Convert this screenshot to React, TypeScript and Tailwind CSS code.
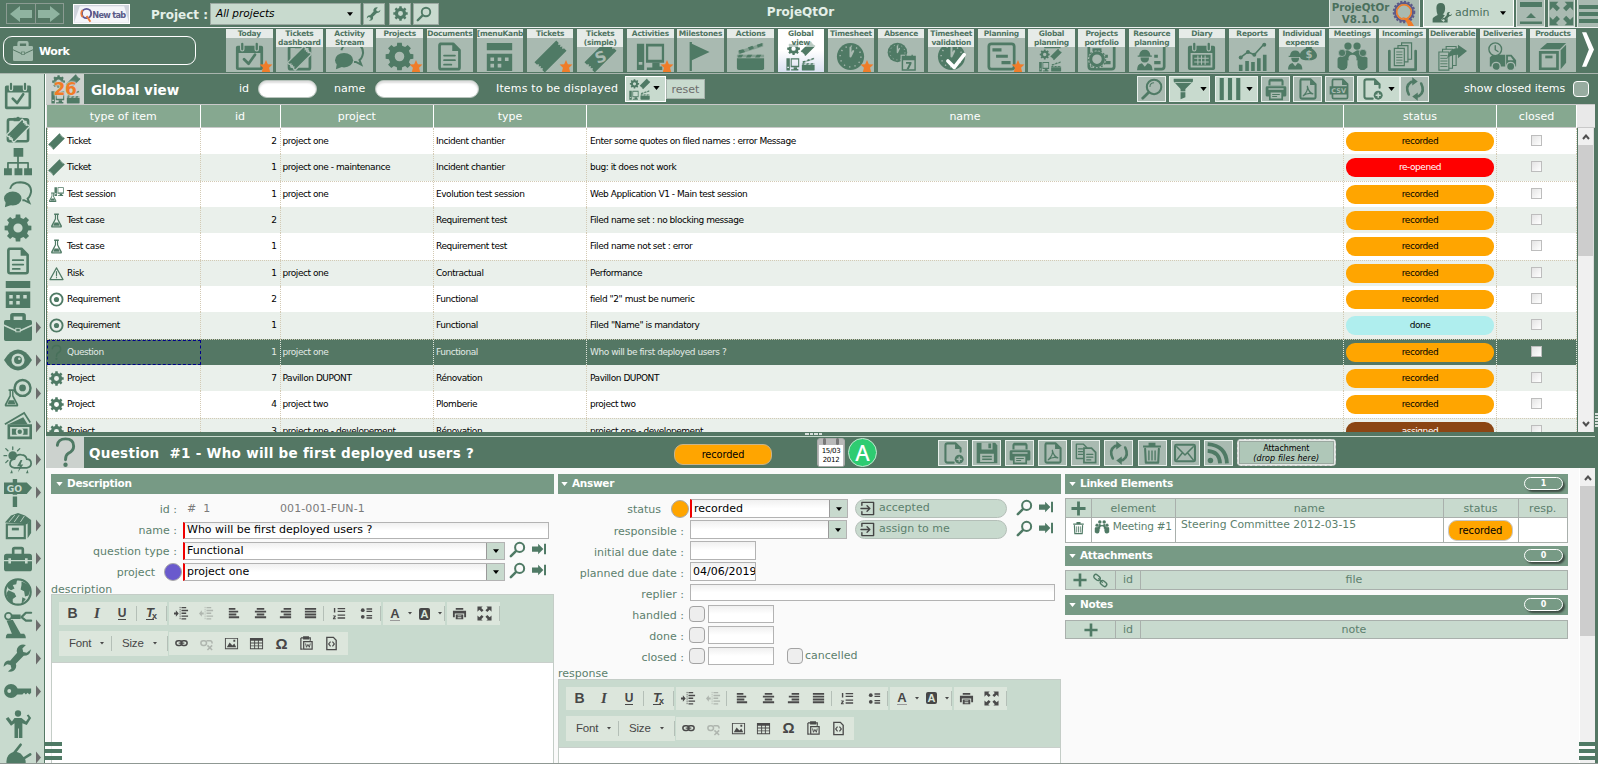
import React from "react";

type Draw = (b: string) => React.ReactNode;

function gearPath(cx: number, cy: number, R: number, r: number, n: number, hole: number) {
  const pts: string[] = [];
  for (let i = 0; i < n; i++) {
    const a = (i / n) * Math.PI * 2 - Math.PI / 2;
    const s = Math.PI / n;
    const at = (ang: number, rad: number) =>
      `${(cx + Math.cos(ang) * rad).toFixed(2)},${(cy + Math.sin(ang) * rad).toFixed(2)}`;
    pts.push(at(a - s * 0.62, r), at(a - s * 0.42, R), at(a + s * 0.42, R), at(a + s * 0.62, r));
  }
  return `M${pts.join("L")}Z M${cx - hole},${cy}a${hole},${hole} 0 1 0 ${hole * 2},0a${hole},${hole} 0 1 0 ${-hole * 2},0Z`;
}

const Gear = ({ x = 16, y = 16, R = 15.5 }: { x?: number; y?: number; R?: number }) => (
  <path fillRule="evenodd" d={gearPath(x, y, R, R * 0.78, 8, R * 0.34)} />
);
const line = (d: string, w = 2.5, c = "currentColor") => (
  <path d={d} fill="none" stroke={c} strokeWidth={w} strokeLinecap="round" strokeLinejoin="round" />
);
const ticket = (
  <path
    transform="translate(16 16) rotate(-45)"
    d="M-17-8H17v3.500l-2 1.500 2 1.500-2 1.500 2 1.500-2 1.500 2 1.500V8H-17V4.500l2-1.500-2-1.500 2-1.500-2-1.500 2-1.500-2-1.500z"
  />
);
const desktop = (
  <>
    <path fillRule="evenodd" d="M1 2h8v29H1zM3 22v3h4v-3z" />
    <path fillRule="evenodd" d="M11 2h20v21H11zM13.500 5v14.500h15V5z" />
    <path d="M18 23h8v4h3v4H12v-3h6z" />
  </>
);
const clapper = (
  <>
    <path d="M1 18h30v11q0 2-2 2H3q-2 0-2-2z" />
    <path d="M1 14h30v3H1z" opacity=".45" />
    <path d="M2 10 30 1v4L3 13.500z" opacity=".4" />
    <path d="M3 9l5-1 2 3-6 2zM13 6l5-2 2 3-5 2zM23 3l6-2v3l-5 2zM3 14h5l-2 3H2zM13 14h5l-2 3h-5zM23 14h5l-2 3h-5z" />
  </>
);
const clock = (b: string) => (
  <>
    <circle cx="16" cy="16" r="15" />
    <circle cx="16" cy="16" r="11.500" fill="none" stroke={b} strokeWidth="1.500" strokeDasharray="1.500 4.520" />
    {line("M16 16V6M16 16l3-6", 2.2, b)}
  </>
);
const doc = (
  <>
    {line("M6 2h14l7 7v19q0 2-2 2H7q-2 0-2-2V4q0-2 2-2z", 3)}
    <path d="M19 2v8h8z" />
    {line("M10 15h12M10 20h12M10 25h8", 2)}
  </>
);
const plan = (
  <>
    <rect x="2" y="2" width="28" height="28" rx="3" fill="none" stroke="currentColor" strokeWidth="3" />
    <path d="M6 7h10v3.500H6zM10 14h13v3.500H10zM16 21h10v3.500H16z" />
  </>
);
const flask = <path fillRule="evenodd" d="M11 1h10v3h-1.500v8l8 15q1 4-2.500 4H7q-3.500 0-2.500-4l8-15V4H11zM15 4v9l-7.500 15h17L17 13V4zM12 20h8l3 7H9z" />;
const target = (
  <>
    <circle cx="16" cy="16" r="13" fill="none" stroke="currentColor" strokeWidth="4" />
    <circle cx="16" cy="16" r="5.500" />
  </>
);
const worker = (
  <>
    <path d="M3 10q1-8 8-8t8 8h2v2H1v-2zM5 13h12q0 7-6 7t-6-7zM0 31q0-9 7-10l4 5 4-5q7 1 7 10z" />
  </>
);
const search = (
  <>
    <circle cx="20" cy="12" r="8.500" fill="none" stroke="currentColor" strokeWidth="3.800" />
    {line("M13 19 3.500 28.500", 4.800)}
  </>
);
const wrench = (
  <path d="M31 6l-5 4-4-1-1-4 4-4q-7-2-10 4-1 3 0 5L7 19q-5-1-7 4l-.5 3 4-3 4 1 1 4-4 3.500q7 1 9-4 1-3 0-5l9-9q7 0 8-6z" />
);
const calendar = (b: string) => (
  <>
    <path fillRule="evenodd" d="M3 4h26q2 0 2 2v23q0 2-2 2H3q-2 0-2-2V6q0-2 2-2zM4 12v16h24V12z" />
    {line("M8 2v6M24 2v6", 5, b)}
    {line("M8 2v6M24 2v6", 2.500)}
  </>
);
const page = (
  <>
    {line("M27 14V9l-7-7H8Q5 2 5 5v22q0 3 3 3h9", 3)}
    <path d="M19 2v8h8z" />
  </>
);
const people = (b: string) => (
  <>
    <circle cx="11" cy="4.500" r="4" />
    <circle cx="21" cy="4.500" r="4" />
    <path d="M5 20v-7q1-4 6-4l5 3 5-3q5 0 6 4v7z" />
    <path d="M-.5 19q0-3 5-3t6 3v9q-3 3-5.500 3t-5.500-3zM21.500 19q0-3 6-3t5 3v9q-3 3-5.500 3t-5.500-3z" />
    <circle cx="4.500" cy="12" r="4" stroke={b} strokeWidth=".8" />
    <circle cx="27.500" cy="12" r="4" stroke={b} strokeWidth=".8" />
    <circle cx="16" cy="18.500" r="4.500" fill={b} />
    <path d="M9.500 32q0-9 6.500-9t6.500 9z" fill={b} />
  </>
);
const mini = (el: React.ReactNode, x: number, y: number, s: number) => (
  <g transform={`translate(${x} ${y}) scale(${s})`}>{el}</g>
);
const globalIcon = (
  <>
    {mini(<Gear />, 1, 0, 0.46)}
    {mini(ticket, 17, 0, 0.46)}
    {mini(desktop, 0, 17, 0.47)}
    {mini(clapper, 17, 17, 0.47)}
  </>
);
const arrowsOut = (
  <path d="M1 1h11L9 4l5 5-4 4-5-5-4 4zM31 1v11l-4-4-5 5-4-4 5-5-3-3zM1 31V20l4 4 5-5 4 4-5 5 3 3zM31 31H20l3-3-5-5 4-4 5 5 4-4z" />
);

const icons: Record<string, Draw> = {
  today: (b) => (<>{calendar(b)}{line("M10 19l5 5 7-10", 3)}</>),
  diary: (b) => (
    <>
      {calendar(b)}
      <path d="M6 14h20v12H6z" />
      <path d="M8 18h16M8 22h16M12 15v10M16 15v10M20 15v10" stroke={b} strokeWidth="1.200" />
    </>
  ),
  clip: (b) => (
    <>
      <rect x="4.500" y="5" width="23" height="25" rx="2" fill="none" stroke="currentColor" strokeWidth="3" />
      <path d="M11 7V3h3a2.500 2.500 0 0 1 4 0h3v4z" />
      <g stroke={b} strokeWidth="2">{mini(ticket, 4, 6, 0.75)}</g>
    </>
  ),
  org: () => (
    <>
      <path d="M11 0h11v10H11zM0 23h9v8H0zM12 23h9v8h-9zM23 23h9v8h-9z" />
      {line("M16 9v15M4.500 24v-7h23v7", 2)}
    </>
  ),
  chat: () => (
    <>
      <ellipse cx="10" cy="20" rx="10" ry="8" />
      <path d="M2 24l-1 6 8-3z" />
      <path d="M7 9Q9 1.500 18.500 1.500 31 2 31 12q-1 6-4 8l2 5-6-3h-2" fill="none" stroke="currentColor" strokeWidth="2.200" />
    </>
  ),
  gear: () => <Gear />,
  doc: () => doc,
  kanban: (b) => (
    <>
      <path d="M2 1h28v8H2zM2 13h28v19H2z" />
      <path d="M6 17h4v4H6zM14 17h4v4h-4zM22 17h4v4h-4zM6 24h4v4H6zM14 24h4v4h-4z" fill={b} />
    </>
  ),
  ticket: () => ticket,
  ticketS: (b) => (
    <>
      {ticket}
      <text x="16" y="22.500" textAnchor="middle" fontSize="17" fontWeight="bold" fill={b} transform="rotate(-20 16 16)">S</text>
    </>
  ),
  desktop: () => desktop,
  flag: () => <path d="M4 0h2.500v2L26 11 6.500 20v12H4z" />,
  clapper: () => clapper,
  global: () => globalIcon,
  clock,
  absence: (b) => (
    <>
      {mini(clock(b), 0, 0, 0.72)}
      <path d="M15 14h17v18H15z" fill={b} />
      <path d="M17 16h14v15H17z" fill="none" stroke="currentColor" strokeWidth="1.600" />
      <path d="M17 16h14v4H17zM20 14h1.500v3H20zM27 14h1.500v3H27z" />
      <path d="M21 22h6v2l-3 6h-2.500l3-6H21z" />
    </>
  ),
  validation: (b) => (<>{clock(b)}{line("M12 21l7 7L30 14", 4, "#fff")}</>),
  plan: () => plan,
  globalPlan: () => (
    <>
      <path d="M1 0h12v3H1zM16 0h12v3H16zM8 5h18v2H8z" />
      {mini(globalIcon, 2, 8, 0.78)}
    </>
  ),
  portfolio: (b) => (
    <>
      {plan}
      <circle cx="11" cy="19" r="10" fill={b} />
      <circle cx="11" cy="19" r="7" fill="none" stroke="currentColor" strokeWidth="3.500" />
      <circle cx="11" cy="19" r="9.500" fill="none" stroke="currentColor" strokeWidth="1.500" strokeDasharray="2 2" />
    </>
  ),
  resource: (b) => (
    <>
      {plan}
      <path d="M0 5h19v27H0z" fill={b} />
      {mini(worker, 0, 7, 0.78)}
    </>
  ),
  reports: () => (
    <>
      <path d="M1 25h4v7H1zM8 21h4v11H8zM14.500 22h4v10h-4zM21 18h4v14h-4zM27.500 14h4v18h-4z" />
      {line("M3 17l8-6 7 3L29 2", 1.800)}
      <circle cx="3" cy="17" r="2.200" /><circle cx="11" cy="11" r="2.200" /><circle cx="18" cy="14" r="2.200" /><circle cx="29" cy="3" r="2.200" />
    </>
  ),
  expense: (b) => (
    <>
      {mini(worker, 0, 8, 0.72)}
      <path d="M19 4h8l-1 3q6 4 6 8t-6 5h-7q-6 0-6-5t7-8z" />
      <text x="23" y="18" textAnchor="middle" fontSize="11" fontWeight="bold" fill={b}>$</text>
    </>
  ),
  people,
  incomings: (b) => (
    <>
      {line("M1.500 10v20.500h29V10", 3)}
      <path d="M15 1h11v18H15z" fill={b} stroke="currentColor" strokeWidth="1.300" />
      <path d="M11 4h11v18H11z" fill={b} stroke="currentColor" strokeWidth="1.300" />
      <path d="M7 7h11v19H7z" fill={b} stroke="currentColor" strokeWidth="1.300" />
      {line("M9.500 11h6M9.500 14h6M9.500 17h6M9.500 20h6M9.500 23h6", 1)}
    </>
  ),
  deliverables: (b) => (
    <>
      <path d="M9 5h11v21H9z" fill={b} stroke="currentColor" strokeWidth="1.200" />
      <path d="M5 8h11v21H5z" fill={b} stroke="currentColor" strokeWidth="1.200" />
      <path d="M1 11h11v20H1z" fill={b} stroke="currentColor" strokeWidth="1.200" />
      {line("M3 15h7M3 18h7M3 21h7M3 24h7M3 27h7", 1)}
      <path d="M10 18Q12 7 22 7V3l10 7-10 8v-4q-8 0-12 4z" />
    </>
  ),
  truck: (b) => (
    <>
      <path fillRule="evenodd" d="M5 14h14v13H2V17zM20 14h6l5 6v7H20zM22 16v4h6l-3-4z" />
      <circle cx="9" cy="27" r="4.500" stroke={b} strokeWidth="1.500" /><circle cx="25" cy="27" r="4.500" stroke={b} strokeWidth="1.500" />
      <circle cx="8" cy="8" r="7" fill={b} stroke="currentColor" strokeWidth="1.500" />
      {line("M8 4v4.500l3 2", 1.500)}
    </>
  ),
  box: () => (
    <>
      <path fillRule="evenodd" d="M1 10h22v21H1zM4 13v15h16V13z" />
      <path d="M2 8L10 1h21l-7 7zM25 9l6-6v20l-6 7z" />
      <path d="M8 15h8v3H8z" />
    </>
  ),
  briefcase: (b) => (
    <>
      <path fillRule="evenodd" d="M7 8V3q0-3 3-3h12q3 0 3 3v5h5q2 0 2 2v20q0 2-2 2H2q-2 0-2-2V10q0-2 2-2zM11 8h10V4H11z" />
      {line("M0 14l13 6h6l13-6", 1.600, b)}
      <path d="M13 17h6v5h-6z" fill={b} />
      <path d="M14 18h4v3h-4z" />
    </>
  ),
  eye: (b) => (
    <>
      <path d="M0 16Q7 4 16 4t16 12Q25 28 16 28T0 16z" />
      <circle cx="16" cy="16" r="7.500" fill={b} />
      <circle cx="16" cy="16" r="4.500" />
      <circle cx="17.500" cy="14.500" r="1.500" fill={b} />
    </>
  ),
  testTarget: () => (<>{mini(target, 10, -1, 0.7)}{mini(flask, -2, 11, 0.66)}</>),
  money: (b) => (
    <>
      <path d="M1 14L23 1l7 11" fill="none" stroke="currentColor" strokeWidth="2" />
      <path d="M5 14L22 6l5 8z" />
      <path fillRule="evenodd" d="M4 14h28v17H4zM7 17v11h22V17z" />
      <path d="M9 19h18v7H9z" />
      <circle cx="18" cy="22.500" r="4.500" fill={b} /><circle cx="18" cy="22.500" r="2.500" />
    </>
  ),
  weather: (b) => (
    <>
      <circle cx="10" cy="11" r="5" />
      {line("M10 1v3M2 3l2.500 2.500M0 11h3M18 3l-2.500 2.500M2 19l2.500-2.500", 1.500)}
      <path d="M12 25q-6-1-5-6 1-4 5-4 2-6 8-5 5 0 6 5 5 0 5 5 0 4-5 5z" fill={b} stroke="currentColor" strokeWidth="2" />
      <path d="M19 16l-4 7h3l-2 7 6-9h-3l2-5zM9 27l-2 4h3zM27 27l-2 4h3z" />
    </>
  ),
  go: (b) => (
    <>
      <path d="M10 0h5v32h-5zM0 4h26l6 6-6 7H0z" />
      <path d="M9 18h7v2H9z" fill={b} />
      <text x="12" y="14.500" textAnchor="middle" fontSize="10.500" fontWeight="bold" fill={b}>GO</text>
    </>
  ),
  boxes: (b) => (
    <>
      <path d="M1 12L8 4l8-3 8 3 7 5-5 5zM27 13l4-4v15l-4 6z" />
      <path fillRule="evenodd" d="M2 13h23v18H2zM4.500 15.500v13h18v-13z" />
      <path d="M9 18h8v3H9z" />
      {line("M6 11l6-7M12 11l5-7M19 11l4-6", 1, b)}
    </>
  ),
  toolbox: (b) => (
    <>
      <path fillRule="evenodd" d="M9 10V5q0-3 3-3h8q3 0 3 3v5h6q3 0 3 3v14q0 3-3 3H3q-3 0-3-3V13q0-3 3-3zM12 10h8V5h-8z" />
      <path d="M0 17h32v1.500H0zM5 15h3v6H5zM24 15h3v6h-3z" fill={b} />
    </>
  ),
  globe: (b) => (
    <>
      <circle cx="16" cy="16" r="14.500" fill={b} stroke="currentColor" strokeWidth="2.500" />
      <path d="M3 8Q8 1 15 2l-1 5-4 1 2 4-4 2-3-2zM5 14l7 3 2 4-4 3v5Q3 24 3 17zM20 4q8 2 10 9l-2 7-4 1-1-6-4-2 1-5zM21 22l4 2-5 6z" />
    </>
  ),
  robot: () => (
    <>
      <circle cx="5" cy="6" r="3.800" fill="none" stroke="currentColor" strokeWidth="2" />
      <path d="M8 4h11v5H8zM3 11l7-1 9 16H9zM4 26h19q2 2 2 5H2q0-4 2-5z" />
      {line("M31 2h-6l-5 5 5 4h6", 2.500)}
    </>
  ),
  wrench: () => wrench,
  key: (b) => (
    <>
      <circle cx="8" cy="16" r="8" />
      <circle cx="6" cy="16" r="2.200" fill={b} />
      <path d="M14 13h17v5l-2 2-2-2-2 2-2-2-2 2h-7z" />
    </>
  ),
  man: () => (
    <>
      <circle cx="16" cy="4" r="3.600" />
      <path d="M12 9h8l5 4 3-4-2-3 2-1 3 4-5 8-5-2v17h-4V21h-1v11h-4V15l-4 3-6-8 3-2 4 5z" />
    </>
  ),
  plug: () => (
    <>
      <path d="M5 14q6-7 14-2l5 6q3 8-5 12H6l-5 2q4-4 2-8-1-6 2-10z" />
      {line("M12 11l7-9M22 18l8-5", 3)}
    </>
  ),
  search: () => search,
  searchBig: () => (
    <>
      <circle cx="19" cy="13" r="10.500" fill="none" stroke="currentColor" strokeWidth="3" />
      <path d="M13 13q0-6 6-6" fill="none" stroke="currentColor" strokeWidth="1.500" />
      {line("M11 21l-8.500 8.500", 4)}
    </>
  ),
  funnel: (b) => (
    <>
      <path d="M1 1h28v4L18 16v12l-7 3V16L1 5z" />
      <path d="M3 6.500h24M10 20h9" stroke={b} strokeWidth="1.200" />
    </>
  ),
  columns: () => <path d="M1 0h6v32H1zM13 0h6v32h-6zM25 0h6v32h-6z" />,
  printer: (b) => (
    <>
      <path d="M7 1h18l2 3v7H5V4zM3 12h26q2 0 2 2v11q0 2-2 2H3q-2 0-2-2V14q0-2 2-2z" />
      <path d="M8 5h16v6H8zM5 15h22v2H5z" fill={b} />
      <path d="M7 20h18v11H7z" fill={b} stroke="currentColor" strokeWidth="2.500" />
      {line("M11 24h10M11 27h6", 1.500)}
    </>
  ),
  pdf: () => (
    <>
      {line("M6 2h14l7 7v19q0 2-2 2H7q-2 0-2-2V4q0-2 2-2z", 3)}
      <path d="M19 2v8h8z" />
      {line("M15 12q2 6-6 14 6-5 14-3-6-2-8-11z", 1.800)}
    </>
  ),
  csv: (b) => (
    <>
      {line("M6 2h14l7 7v19q0 2-2 2H7q-2 0-2-2V4q0-2 2-2z", 2.500)}
      <path d="M19 2v8h8zM1 12h26v12H1z" />
      <text x="14" y="21.500" textAnchor="middle" fontSize="9.500" fontWeight="bold" fill={b}>CSV</text>
    </>
  ),
  newdoc: (b) => (
    <>
      {page}
      <circle cx="25" cy="25" r="6.500" />
      {line("M25 22v6M22 25h6", 2, b)}
    </>
  ),
  refresh: () => (
    <>
      {line("M7 24Q1 12 10 6l4-1M25 8q6 12-3 18l-4 1", 3.800)}
      <path d="M12-1l8 6-8 6zM20 21l-8 6 8 6z" />
    </>
  ),
  save: (b) => (
    <>
      <path d="M1 1h27l3 4v26H1z" />
      <path d="M8 1h16v10H8zM6 17h20v12H6z" fill={b} />
      <path d="M18 2h4v7h-4zM9 20h14v2H9zM9 24h14v2H9z" />
    </>
  ),
  copy: (b) => (
    <>
      {line("M2 3h10l5 5v16H2z", 2)}
      {line("M5 10h6M5 14h6M5 18h6", 1.600)}
      <path d="M13 9h11l6 6v15H13z" fill={b} stroke="currentColor" strokeWidth="2.500" />
      {line("M17 18h9M17 22h9M17 26h6", 1.600)}
    </>
  ),
  trash: () => (
    <>
      <path d="M3 5h26v3H3zM11 1h10v4H11z" />
      {line("M6 10l1 20h18l1-20", 3)}
      {line("M11.500 13v13M16 13v13M20.500 13v13", 2)}
    </>
  ),
  mail: () => (
    <>
      <rect x="1.500" y="4" width="29" height="24" rx="2" fill="none" stroke="currentColor" strokeWidth="3" />
      {line("M4 7l12 12L28 7M4 26l8-10M28 26l-8-10", 2.200)}
    </>
  ),
  rss: () => (
    <>
      <circle cx="5" cy="27" r="4" />
      <path d="M1 13q17 1 18 18M1 3q27 2 28 28" fill="none" stroke="currentColor" strokeWidth="5.500" />
    </>
  ),
  user: (b) => (
    <>
      <path d="M7 8q0-8 7-8t7 8-4 10l8 4v9H1v-6q1-3 8-6-2-5-2-11z" />
      <path d="M29 14L17 29" stroke={b} strokeWidth="6" />
      {mini(wrench, 16, 14, 0.52)}
    </>
  ),
  goto: () => <path d="M0 10h14V4l12 12-12 12v-6H0zM27.500 4H32v24h-4.500z" />,
  enter: () => (
    <>
      {line("M4 9V3h25v26H4v-6", 3)}
      {line("M2 16h18M15 10l6 6-6 6", 2.800)}
    </>
  ),
  out: () => arrowsOut,
  test: () => flask,
  testSession: () => (<>{mini(desktop, 11, -1, 0.66)}{mini(flask, -3, 11, 0.68)}</>),
  risk: () => (<>{line("M16 4L30 29H2z", 2.500)}{line("M16 12v9M16 24.500v.5", 2.500)}</>),
  target: () => target,
  question: () => (
    <>
      {line("M7 8q1-7 9-7 9 0 9 8 0 5-6 8-3 2-3 7", 3.200)}
      <circle cx="16" cy="29.500" r="2.400" />
    </>
  ),
  plus: () => <path d="M13 1h6v12h12v6H19v12h-6V19H1v-6h12z" />,
  chain: () => (
    <>
      <rect x="1" y="5" width="15" height="9" rx="4.500" fill="none" stroke="currentColor" strokeWidth="3" transform="rotate(40 8.500 9.500)" />
      <rect x="15" y="18" width="15" height="9" rx="4.500" fill="none" stroke="currentColor" strokeWidth="3" transform="rotate(40 22.500 22.500)" />
      {line("M12 12l8 8", 2.500)}
    </>
  ),
};

function Icon({ n, b = "#a9bab1", className = "" }: { n: string; b?: string; className?: string }) {
  return (
    <svg viewBox="0 0 32 32" fill="currentColor" className={`shrink-0 overflow-visible ${className}`}>
      {icons[n](b)}
    </svg>
  );
}

const Caret = ({ size = "h-[4px] w-[7px]", className = "" }: { size?: string; className?: string }) => (
  <svg viewBox="0 0 8 5" className={`shrink-0 ${size} ${className}`}><path d="M0 0h8L4 5z" fill="currentColor" /></svg>
);

const Star = () => (
  <svg viewBox="0 0 14 13" className="absolute right-0 bottom-0 h-[12px] w-[14px]">
    <path d="M7 0l2 4.500 5 .5-3.700 3.300L11.500 13H2.500l1.200-4.700L0 5l5-.5z" fill="#f07c28" />
  </svg>
);

const menu: { l: string[]; i: string; star?: boolean; on?: boolean }[] = [
  { l: ["Today"], i: "today", star: true },
  { l: ["Tickets", "dashboard"], i: "clip" },
  { l: ["Activity", "Stream"], i: "chat" },
  { l: ["Projects"], i: "gear", star: true },
  { l: ["Documents"], i: "doc" },
  { l: ["[menuKanb"], i: "kanban" },
  { l: ["Tickets"], i: "ticket", star: true },
  { l: ["Tickets", "(simple)"], i: "ticketS" },
  { l: ["Activities"], i: "desktop", star: true },
  { l: ["Milestones"], i: "flag" },
  { l: ["Actions"], i: "clapper" },
  { l: ["Global", "view"], i: "global", on: true },
  { l: ["Timesheet"], i: "clock", star: true },
  { l: ["Absence"], i: "absence" },
  { l: ["Timesheet", "validation"], i: "validation" },
  { l: ["Planning"], i: "plan", star: true },
  { l: ["Global", "planning"], i: "globalPlan" },
  { l: ["Projects", "portfolio"], i: "portfolio" },
  { l: ["Resource", "planning"], i: "resource" },
  { l: ["Diary"], i: "diary" },
  { l: ["Reports"], i: "reports" },
  { l: ["Individual", "expense"], i: "expense" },
  { l: ["Meetings"], i: "people" },
  { l: ["Incomings"], i: "incomings" },
  { l: ["Deliverable"], i: "deliverables" },
  { l: ["Deliveries"], i: "truck" },
  { l: ["Products"], i: "box" },
];

function TopBar() {
  return (
    <div className="flex h-[28px] items-center border-b border-white/90 text-[#e4efe8]">
      <div className="ml-[6px] flex h-[21px] w-[58px] shrink-0 border border-[#8b9b92]">
        <div className="flex w-[29px] items-center justify-center border-r border-[#8b9b92]">
          <svg viewBox="0 0 22 16" className="h-[16px] w-[22px]"><path d="M0 8L10 0v4h12v8H10v4z" fill="#8fb3a0" /></svg>
        </div>
        <div className="flex w-[28px] items-center justify-center">
          <svg viewBox="0 0 22 16" className="h-[16px] w-[22px]"><path d="M22 8L12 0v4H0v8h12v4z" fill="#8fb3a0" /></svg>
        </div>
      </div>
      <div className="ml-[9px] flex h-[20px] w-[57px] shrink-0 items-center overflow-hidden border border-white bg-[#cfd3dc]">
        <svg viewBox="0 0 57 18" className="h-[18px] w-[57px]">
          <path d="M0 18L6 1h46l5 17z" fill="#f4f5f9" />
          <circle cx="13" cy="8.500" r="4.800" fill="none" stroke="#5c5796" strokeWidth="2" />
          <path d="M9 5a5 5 0 0 0 0 7M13 11l4 6" stroke="#e87a3c" strokeWidth="2" fill="none" />
          <text x="19" y="13" fontSize="8.500" fontWeight="bold" fill="#5a5a88" textLength="35">New tab</text>
        </svg>
      </div>
      <div className="mt-[3px] ml-[21px] w-[59px] shrink-0 text-[12px] leading-[14px] font-bold whitespace-nowrap">Project :</div>
      <div className="flex h-[22px] w-[151px] shrink-0 items-center border border-[#9aa8a0] bg-[#c8dace] pr-[7px] pl-[5px] text-black">
        <span className="flex-1 pt-px text-[10.5px] italic">All projects</span>
        <Caret size="h-[4px] w-[6px]" />
      </div>
      <div className="ml-[2px] flex h-[22px] w-[22px] shrink-0 items-center justify-center border border-[#9aa8a0] bg-[#c8dace] text-[#4f7a65]"><Icon n="wrench" className="size-[14px]" /></div>
      <div className="ml-[4px] flex h-[22px] w-[22px] shrink-0 items-center justify-center border border-[#9aa8a0] bg-[#c8dace] text-[#4f7a65]"><Icon n="gear" className="size-[15px]" /></div>
      <div className="ml-[2px] flex h-[22px] w-[26px] shrink-0 items-center border border-[#9aa8a0] bg-[#c8dace] pl-[2px] text-[#4f7a65]"><Icon n="search" className="size-[16px]" /></div>
      <div className="flex flex-1 justify-center pr-[167px] pb-[4px] text-[12px] font-bold">ProjeQtOr</div>
      <div className="flex h-[27px] w-[91px] shrink-0 items-center border border-t-0 border-[#dfe8e2] bg-[#a9bab1] text-[#4b705d]">
        <div className="w-[61px] text-center text-[10.3px] leading-[12px] font-bold">ProjeQtOr<br />V8.1.0</div>
        <svg viewBox="0 0 26 26" className="h-[26px] w-[26px]">
          <circle cx="13" cy="12" r="10.300" fill="none" stroke="#5d5a88" strokeWidth="2" strokeDasharray="2.200 1.500" />
          <circle cx="13" cy="12" r="9" fill="none" stroke="#5d5a88" strokeWidth="2" />
          <circle cx="13" cy="12" r="7.300" fill="none" stroke="#f07c28" strokeWidth="1.600" />
          <path d="M11 17q9 1 12 9h-6q-1-5-6-9z" fill="#f07c28" />
        </svg>
      </div>
      <div className="ml-[3px] flex h-[27px] w-[91px] shrink-0 items-center border border-t-0 border-white bg-[#c8dace] text-[#4b705d]">
        <Icon n="user" b="#c8dace" className="ml-[8px] h-[20px] w-[20px]" />
        <span className="ml-[3px] w-[45px] text-[11px]">admin</span>
        <Caret size="h-[4px] w-[6px]" className="text-black" />
      </div>
      <div className="ml-[2px] flex h-[27px] w-[29px] shrink-0 items-center justify-center border border-t-0 border-[#dfe8e2] bg-[#a9bab1] text-[#4f7a65]">
        <svg viewBox="0 0 22 22" className="h-[22px] w-[22px]" fill="currentColor"><path d="M0 0h22v5H0zM0 19.500h22v3H0zM6 16l5-5 5 5z" /></svg>
      </div>
      <div className="ml-[3px] flex h-[27px] w-[27px] shrink-0 items-center justify-center border border-t-0 border-[#dfe8e2] bg-[#a9bab1] text-[#4f7a65]"><Icon n="out" className="size-[25px]" /></div>
      <div className="ml-[2px] flex h-[27px] w-[21px] shrink-0 flex-col justify-center gap-[3px] overflow-hidden border-l border-[#dfe8e2] bg-[#a9bab1] pl-px">
        <div className="h-[4px] bg-[#4f7a65]" /><div className="h-[4px] bg-[#4f7a65]" /><div className="h-[4px] bg-[#4f7a65]" />
      </div>
    </div>
  );
}

function MenuBar() {
  return (
    <div className="flex h-[46px] border-b border-[#a9b5ae] pt-px">
      <div className="mt-[7px] ml-[3px] flex h-[29px] w-[193px] shrink-0 items-center rounded-[9px] border border-white pl-[8px]">
        <Icon n="briefcase" b="#547764" className="h-[20px] w-[22px] text-[#a3bcae]" />
        <span className="ml-[5px] pt-[4px] text-[11px] font-bold tracking-[-0.4px] text-white">Work</span>
      </div>
      <div className="ml-[30px] flex w-[1354px] shrink-0">
        {menu.map((m, k) => (
          <div key={k} className="w-[50.15px] shrink-0">
            <div className={`relative flex h-[43px] w-[46.5px] flex-col items-center justify-end overflow-hidden pb-[1px] text-[#4f7a65] ${m.on ? "bg-linear-to-b from-white via-white to-[#d9e0f0]" : "bg-[#a9bab1]"}`}>
              <Icon n={m.i} b={m.on ? "#fff" : "#a9bab1"} className="size-[29px]" />
              {m.star && <Star />}
              <div className={`absolute inset-x-0 top-0 text-center text-[7.5px] leading-[9px] font-bold tracking-[-0.25px] whitespace-nowrap text-[#4f7462] ${m.on ? "bg-white/60" : "bg-[#e6ebe8]"}`}>
                {m.l.map((t) => <div key={t}>{t}</div>)}
              </div>
            </div>
          </div>
        ))}
      </div>
      <svg viewBox="0 0 14 40" className="ml-[2px] h-[41px] w-[12px]"><path d="M0 0h5l9 20-9 20H0l8-20z" fill="#fff" /></svg>
    </div>
  );
}

const side = ["today", "clip", "org", "chat", "gear", "doc", "kanban", "briefcase", "eye", "testTarget", "money", "weather", "go", "boxes", "toolbox", "globe", "robot", "wrench", "key", "man", "plug"];

function Sidebar() {
  return (
    <div className="w-[45px] shrink-0 overflow-hidden border-r border-[#547764] bg-[#c8dace] pt-[5px] text-[#4f7a65]">
      {side.map((s, k) => (
        <div key={s} className="flex h-[33.1px] items-center pl-[4px]">
          <Icon n={s} b="#c8dace" className="size-[28px]" />
          {k >= 7 && s !== "man" && (
            <svg viewBox="0 0 5 12" className="ml-[4px] h-[13px] w-[5px]"><path d="M0 0l5 6-5 6z" fill="#6c6c6c" /></svg>
          )}
        </div>
      ))}
    </div>
  );
}

function Btn({ n, w = "w-[29px]", ml, caret }: { n: string; w?: string; ml: string; caret?: boolean }) {
  return (
    <div className={`flex h-[26px] shrink-0 items-center border border-[#e9f0ec] text-[#4f7a65] ${w} ${ml} ${caret ? "bg-[#c8dace] pl-[3px]" : "justify-center bg-[#a9bab1]"}`}>
      <Icon n={n} b={caret ? "#c8dace" : "#a9bab1"} className="size-[22px]" />
      {caret && <Caret className="ml-[5px] text-black" />}
    </div>
  );
}

const cols = "grid grid-cols-[153.5px_80px_153.5px_153px_757px_153px_80px]";
const rows: [string, string, string, string, string, string, string, string][] = [
  ["ticket", "Ticket", "2", "project one", "Incident chantier", "Enter some quotes on filed names : error Message", "recorded", "bg-[#ffa500]"],
  ["ticket", "Ticket", "1", "project one - maintenance", "Incident chantier", "bug: it does not work", "re-opened", "bg-[#ff0000] text-white"],
  ["testSession", "Test session", "1", "project one", "Evolution test session", "Web Application V1 - Main test session", "recorded", "bg-[#ffa500]"],
  ["test", "Test case", "2", "", "Requirement test", "Filed name set : no blocking message", "recorded", "bg-[#ffa500]"],
  ["test", "Test case", "1", "", "Requirement test", "Filed name not set : error", "recorded", "bg-[#ffa500]"],
  ["risk", "Risk", "1", "project one", "Contractual", "Performance", "recorded", "bg-[#ffa500]"],
  ["target", "Requirement", "2", "", "Functional", "field \"2\" must be numeric", "recorded", "bg-[#ffa500]"],
  ["target", "Requirement", "1", "", "Functional", "Filed \"Name\" is mandatory", "done", "bg-[#afeeee]"],
  ["question", "Question", "1", "project one", "Functional", "Who will be first deployed users ?", "recorded", "bg-[#ffa500]"],
  ["gear", "Project", "7", "Pavillon DUPONT", "Rénovation", "Pavillon DUPONT", "recorded", "bg-[#ffa500]"],
  ["gear", "Project", "4", "project two", "Plomberie", "project two", "recorded", "bg-[#ffa500]"],
  ["gear", "Project", "3", "project one - developement", "Rénovation", "project one - developement", "assigned", "bg-[#8b4513] text-white"],
];

function Grid() {
  return (
    <div className="relative h-[328px] overflow-hidden">
      <div className="flex h-[24px] border-y border-[#c9c9c9] bg-[#e9e9e9] pl-px">
        <div className={`${cols} w-[1530px] bg-[#86a890] text-center text-[11px] leading-[23px] text-white`}>
          {["type of item", "id", "project", "type", "name", "status", "closed"].map((h) => (
            <div key={h} className="border-r border-white">{h}</div>
          ))}
        </div>
      </div>
      <div className="flex h-[304px] pl-px">
        <div className="w-[1530px] shrink-0 overflow-hidden text-[9px] tracking-[-0.45px] text-black">
          {rows.map((r, k) => {
            const sel = k === 8;
            const cell = `flex items-center border-r border-dotted ${sel ? "border-[#dfe5da]" : "border-[#d3cab4]"}`;
            return (
              <div
                key={k}
                className={`${cols} h-[26.33px] ${sel ? "bg-[#547764] text-[#e3ebe6]" : k % 2 ? "bg-[#eaf0eb]" : "bg-white"} ${[2, 5, 8, 11].includes(k) ? "border-t border-dotted border-[#d3cab4]" : ""}`}
              >
                <div className={sel ? "flex items-center border border-dashed border-[#00008b] pl-[1px]" : `${cell} border-l pl-[1px]`}>
                  <Icon n={r[0]} b="#fff" className={`size-[15px] ${sel ? "text-[#47705a]" : "text-[#4f7a65]"}`} />
                  <span className="ml-[3px] pt-px">{r[1]}</span>
                </div>
                <div className={`${cell} justify-end pt-px pr-[3px]`}>{r[2]}</div>
                <div className={`${cell} pt-px pl-[2px]`}>{r[3]}</div>
                <div className={`${cell} pt-px pl-[2px]`}>{r[4]}</div>
                <div className={`${cell} pt-px pl-[3px]`}>{r[5]}</div>
                <div className={`${cell} pl-[2px]`}>
                  <div className={`h-[19px] w-[148px] rounded-[9px] text-center leading-[19px] ${sel ? "text-black" : ""} ${r[7]}`}>{r[6]}</div>
                </div>
                <div className={`${cell} justify-center`}>
                  <div className="mb-px size-[11px] border border-[#bdbdbd] bg-linear-to-br from-[#e4e4e4] to-white" />
                </div>
              </div>
            );
          })}
        </div>
        <div className="ml-px flex w-[15px] flex-col items-center bg-[#f0f0f0]">
          <svg viewBox="0 0 8 6" className="mt-[6px] h-[6px] w-[8px]"><path d="M1 5l3-3.500L7 5" stroke="#505050" strokeWidth="2" fill="none" /></svg>
          <div className="mt-[5px] h-[111px] w-full bg-[#cdcdcd]" />
          <svg viewBox="0 0 8 6" className="mt-auto mb-[5px] h-[6px] w-[8px]"><path d="M1 1l3 3.500L7 1" stroke="#505050" strokeWidth="2" fill="none" /></svg>
        </div>
        <div className="w-px bg-[#dcdcdc]" />
      </div>
    </div>
  );
}

function Section({ t, n, pl = "pl-[5px]", className = "" }: { t: string; n?: string; pl?: string; className?: string }) {
  return (
    <div className={`flex h-[20px] items-center bg-[#779a85] pr-[5px] text-white ${pl} ${className}`}>
      <Caret />
      <span className="ml-[4px] flex-1 text-[10.5px] font-bold tracking-[-0.3px]">{t}</span>
      {n && (
        <div className="mb-[2px] h-[13px] w-[39px] rounded-full border border-white text-center text-[8px] leading-[11px] font-bold shadow-[2px_2px_2px_#3c4a42]">{n}</div>
      )}
    </div>
  );
}

const Label = ({ t, w, className = "" }: { t: string; w: string; className?: string }) => (
  <div className={`shrink-0 pt-[2px] text-right text-[11px] leading-[14px] whitespace-nowrap text-[#5c7f6d] ${w} ${className}`}>{t}</div>
);
const field = "shrink-0 border border-[#b3b3b3] bg-linear-to-b from-[#f0f0f0] via-white to-white text-[11px] text-black overflow-hidden whitespace-nowrap flex items-center";

const Select = ({ t, w, red }: { t: string; w: string; red?: boolean }) => (
  <div className={`${field} h-[18.500px] ${w} ${red ? "border-l-2 border-l-[#f00000]" : ""}`}>
    <span className="flex-1 pt-px pl-[2px]">{t}</span>
    <span className="flex h-full w-[18px] items-center justify-center border-l border-[#9a9a9a] bg-[#c8dace]"><Caret size="h-[4px] w-[6px]" /></span>
  </div>
);
const Links = ({ ml }: { ml: string }) => (
  <div className={`flex items-start pb-[3px] text-[#4f7a65] ${ml}`}>
    <Icon n="search" className="size-[17px]" />
    <Icon n="goto" className="mt-px ml-[6px] size-[14px]" />
  </div>
);

const Slot = ({ children, w = "w-[25px]", dim }: { children: React.ReactNode; w?: string; dim?: boolean }) => (
  <div className={`flex shrink-0 items-center justify-center ${w} ${dim ? "opacity-30" : ""}`}>{children}</div>
);
const Sep = () => <div className="h-[15px] w-px shrink-0 bg-[#b4bfb7]" />;
const Ck = ({ children }: { children: React.ReactNode }) => (
  <svg viewBox="0 0 16 16" className="h-[15px] w-[15px]" fill="#4a4a4a">{children}</svg>
);
const Tiny = () => <Caret size="h-[2.500px] w-[4px]" />;
const bars = (a: number[][]) => <path d={a.map(([x, y, w]) => `M${x} ${y}h${w}v2h${-w}z`).join("")} />;

function Editor({ mid, g2, g3, top }: { mid?: boolean; g2: string; g3: string; top: string }) {
  const group = "flex items-center bg-[#dce6dc]";
  const indent = (dir: string) => (
    <Ck>
      <path d="M8 1h5v1.500H8zM8 4h7v1.500H8zM8 7h5v1.500H8zM8 10h7v1.500H8zM8 13h5v1.500H8z" />
      <path d={dir} />
      <path d="M6.500 1v14" stroke="#4a4a4a" strokeDasharray="1 1" />
    </Ck>
  );
  return (
    <div className="flex min-h-0 flex-1 flex-col border border-b-0 border-[#c4cdc7] bg-white text-[#474747]">
      <div className={`h-[68px] shrink-0 border-b border-[#c9cfcb] bg-[#c8dace] pl-[7px] font-['Liberation_Sans',sans-serif] text-[12px] ${top}`}>
        <div className="flex h-[23px] gap-[2px]">
          <div className={`${group} w-[108px]`}>
            <Slot w="w-[27px]"><b className="text-[14px]">B</b></Slot>
            <Slot w="w-[22px]"><b className="font-['Liberation_Serif',serif] text-[15px] italic">I</b></Slot>
            <Slot w="w-[28px]"><b className="border-b border-[#474747] text-[12px] leading-[12px]">U</b></Slot>
            <Sep />
            <Slot w="w-[29px]"><b className="border-b border-[#474747] text-[13px] leading-[12px] italic">T</b><b className="-ml-[2px] pt-[7px] text-[9px]">x</b></Slot>
            <Sep />
          </div>
          <div className={`${group} ${g2}`}>
            <Slot>{indent("M0 7h2V4.500L5 8l-3 3.500V9H0z")}</Slot>
            <Slot dim>{indent("M5 7H3V4.500L0 8l3 3.500V9h2z")}</Slot>
            {mid && <Sep />}
            <Slot w="w-[29px]"><Ck>{bars([[3, 2, 7], [3, 5, 10], [3, 8, 8], [3, 11, 11]])}</Ck></Slot>
            <Slot><Ck>{bars([[4, 2, 8], [2, 5, 12], [4, 8, 8], [2, 11, 12]])}</Ck></Slot>
            <Slot><Ck>{bars([[6, 2, 8], [3, 5, 11], [6, 8, 8], [2, 11, 12]])}</Ck></Slot>
            <Slot><Ck>{bars([[2, 2, 12], [2, 5, 12], [2, 8, 12], [2, 11, 12]])}</Ck></Slot>
            <Sep />
            <Slot w="w-[30px]"><Ck><path d="M6 2h8v1.500H6zM6 5h8v1.500H6zM6 9h8v1.500H6zM6 12h8v1.500H6zM2 2h1.500v5H2zM1 10h3v1.500L2.500 13H4v1H1v-1l1.500-2H1z" /></Ck></Slot>
            <Slot w="w-[24px]"><Ck><path d="M8 2.500h6V4H8zM8 5h6v1.500H8zM8 9.500h6V11H8zM8 12h6v1.500H8z" /><circle cx="4" cy="4.500" r="2" /><circle cx="4" cy="11.500" r="2" /></Ck></Slot>
            <div className="ml-auto"><Sep /></div>
          </div>
          <div className={`${group} w-[62px]`}>
            <Slot w="w-[24px]"><b className="border-b border-[#9a9a9a] text-[13px] leading-[13px]">A</b></Slot>
            <Slot w="w-[5px]"><Tiny /></Slot>
            <Slot w="w-[25px]"><b className="rounded-[2px] bg-[#474747] px-[2px] text-[11px] leading-[12px] text-[#dce6dc]">A</b></Slot>
            <Slot w="w-[5px]"><Tiny /></Slot>
            <div className="ml-auto"><Sep /></div>
          </div>
          <div className={`${group} w-[53px]`}>
            <Slot><Ck><path d="M4 2h8v2H4zM1 5h14v7h-2V8H3v4H1zM4 9h8v5H4zM6 10h4v1H6zM6 12h4v1H6z" fillRule="evenodd" /></Ck></Slot>
            <Slot><Ck><g transform="scale(.5)">{arrowsOut}</g></Ck></Slot>
            <div className="ml-auto"><Sep /></div>
          </div>
        </div>
        <div className="mt-[6px] flex h-[25px] items-center gap-px">
          <div className={`${group} h-[25px] w-[109px]`}>
            <span className="ml-[10px] w-[29px] pt-px text-[11.5px] tracking-[-0.2px]">Font</span>
            <Slot w="w-[7px]"><Tiny /></Slot>
            <div className="ml-[6px]"><Sep /></div>
            <span className="ml-[10px] w-[29px] pt-px text-[11.5px] tracking-[-0.2px]">Size</span>
            <Slot w="w-[7px]"><Tiny /></Slot>
            <div className="ml-auto"><Sep /></div>
          </div>
          <div className={`${group} h-[23px] ${g3}`}>
            <Slot><Ck><rect x="2" y="5" width="6.500" height="5" rx="2.500" fill="none" stroke="#4a4a4a" strokeWidth="1.600" /><rect x="7.500" y="5" width="6.500" height="5" rx="2.500" fill="none" stroke="#4a4a4a" strokeWidth="1.600" /><path d="M5 7h6v1.200H5z" /></Ck></Slot>
            <Slot dim><Ck><rect x="2" y="5" width="6" height="5" rx="2.500" fill="none" stroke="#4a4a4a" strokeWidth="1.600" /><path d="M8 5h4q2 0 2 3M9 10l5 5M14 10l-5 5" fill="none" stroke="#4a4a4a" strokeWidth="1.600" /></Ck></Slot>
            <Slot><Ck><path fillRule="evenodd" d="M1 2h14v12H1zM2 3v10h12V3zM3 12l3-5 3 3 2-2 2 4zM10 4h2v2h-2z" /></Ck></Slot>
            <Slot><Ck><path fillRule="evenodd" d="M1 2h14v12H1zM2 5v2h3.500V5zM6.500 5v2h3V5zM10.500 5v2H14V5zM2 8v2h3.500V8zM6.500 8v2h3V8zM10.500 8v2H14V8zM2 11v2h3.500v-2zM6.500 11v2h3v-2zM10.500 11v2H14v-2z" /></Ck></Slot>
            <Slot><b className="text-[15px] leading-[14px]">Ω</b></Slot>
            <Slot><Ck><path d="M2 2h10v3M2 2v12h2M5 1h5v2H5zM5 6h9v8H5z" fill="none" stroke="#4a4a4a" strokeWidth="1.300" /><path d="M7 8l1 4 1.500-3L11 12l1-4" fill="none" stroke="#4a4a4a" /></Ck></Slot>
            <Slot><Ck><path d="M3 1.500h7l3 3v10H3z" fill="none" stroke="#4a4a4a" strokeWidth="1.400" /><path d="M7 6L5 8.500 7 11M9 6l2 2.500L9 11" fill="none" stroke="#4a4a4a" strokeWidth="1.200" /></Ck></Slot>
          </div>
        </div>
      </div>
    </div>
  );
}

function Description() {
  return (
    <div className="flex w-[503px] shrink-0 flex-col">
      <Section t="Description" />
      <div className="pt-[4.500px]">
        <div className="flex h-[21px] items-center">
          <Label t="id :" w="w-[126px]" />
          <span className="ml-[10px] w-[93px] text-[11px] text-[#7a7a7a]">#&nbsp; 1</span>
          <span className="text-[11px] tracking-[0.1px] text-[#7a7a7a]">001-001-FUN-1</span>
        </div>
        <div className="flex h-[21px] items-center">
          <Label t="name :" w="w-[126px]" />
          <div className={`${field} ml-[6px] h-[17px] w-[366px] border-l-2 border-l-[#f00000] pl-[2px]`}>Who will be first deployed users ?</div>
        </div>
        <div className="flex h-[21px] items-center">
          <Label t="question type :" w="w-[126px]" className="tracking-[0.08px]" />
          <div className="w-[6px]" />
          <Select t="Functional" w="w-[322px]" red />
          <Links ml="ml-[4px]" />
        </div>
        <div className="flex h-[21px] items-center">
          <Label t="project" w="w-[104px]" />
          <div className="mr-[1px] ml-[9px] size-[18px] rounded-full border border-[#a9a9a9] bg-[#6a5acd]" />
          <Select t="project one" w="w-[322px]" red />
          <Links ml="ml-[4px]" />
        </div>
      </div>
      <div className="h-[11.500px] text-[11px] leading-[13px] text-[#5c7f6d]">description</div>
      <Editor g2="w-[212px]" g3="w-[179px]" top="pt-[7px]" />
    </div>
  );
}

const Check = () => <div className="size-[16px] shrink-0 rounded-[4px] border border-[#a3a3a3] bg-[#eeeeee]" />;

function Answer() {
  const row = "flex h-[21.1px] items-center";
  const action = "flex h-[19px] w-[152px] shrink-0 items-center rounded-[10px] border border-[#b4bfb8] bg-[#c8dace] pl-[4px] text-[11px] text-[#5c7f6d]";
  const low = "mt-[2px]";
  return (
    <div className="ml-[4px] flex w-[503px] shrink-0 flex-col">
      <Section t="Answer" pl="pl-[3px]" />
      <div className="pt-[4px]">
        <div className={row}>
          <Label t="status" w="w-[103px]" />
          <div className="mr-[1px] ml-[10px] size-[18px] rounded-full border border-[#a9a9a9] bg-[#ffa500]" />
          <Select t="recorded" w="w-[158px]" red />
          <div className={`${action} ml-[7px]`}><Icon n="enter" className="size-[15px] text-[#444]" /><span className="ml-[4px]">accepted</span></div>
          <Links ml="ml-[9px]" />
        </div>
        <div className={row}>
          <Label t="responsible :" w="w-[126px]" className={low} />
          <div className="w-[6px]" />
          <Select t="" w="w-[157px]" />
          <div className={`${action} ml-[8px]`}><Icon n="enter" className="size-[15px] text-[#444]" /><span className="ml-[4px]">assign to me</span></div>
          <Links ml="ml-[9px]" />
        </div>
        <div className={row}><Label t="initial due date :" w="w-[126px]" className={low} /><div className={`${field} ml-[6px] h-[19px] w-[66px]`} /></div>
        <div className={row}><Label t="planned due date :" w="w-[126px]" className={low} /><div className={`${field} ml-[6px] h-[19px] w-[66px] pl-[2px]`}>04/06/2019</div></div>
        <div className={row}><Label t="replier :" w="w-[126px]" className={low} /><div className={`${field} ml-[6px] h-[17px] w-[365px]`} /></div>
        {["handled :", "done :", "closed :"].map((t) => (
          <div key={t} className={row}>
            <Label t={t} w="w-[126px]" className="mt-[2px] mr-[5px]" />
            <Check />
            <div className={`${field} ml-[3px] h-[18.500px] w-[66px]`} />
            {t === "closed :" && (
              <>
                <div className="w-[13px]" />
                <Check />
                <span className="ml-[2px] text-[11px] text-[#5c7f6d]">cancelled</span>
              </>
            )}
          </div>
        ))}
      </div>
      <div className="h-[12px] text-[11px] leading-[14px] text-[#5c7f6d]">response</div>
      <Editor mid g2="w-[212px]" g3="w-[178px]" top="pt-[7px]" />
    </div>
  );
}

function Side() {
  const th = "flex items-center justify-center border-r border-[#a9b0ac]";
  const box = "grid border border-r-0 border-[#a9b0ac] bg-[#c8dace] text-[11px] text-[#5c7f6d]";
  return (
    <div className="ml-[4px] w-[503px] shrink-0">
      <Section t="Linked Elements" n="1" pl="pl-[4px]" />
      <div className={`${box} mt-[4px] h-[45px] grid-cols-[25.5px_84.5px_267.500px_75px_49.500px] grid-rows-[19px_24px]`}>
        <div className={`${th} border-b`}><Icon n="plus" className="size-[15px] text-[#4f7a65]" /></div>
        <div className={`${th} border-b pt-[2px]`}>element</div>
        <div className={`${th} border-b pt-[2px]`}>name</div>
        <div className={`${th} border-b pt-[2px]`}>status</div>
        <div className={`${th} border-b pt-[2px]`}>resp.</div>
        <div className={`${th} bg-white pb-[4px]`}><Icon n="trash" className="h-[14px] w-[13px] text-[#4f7a65]" /></div>
        <div className={`${th} bg-white pb-[7px] text-[10.5px] tracking-[-0.2px] whitespace-nowrap`}><Icon n="people" b="#fff" className="mr-[4px] size-[14px] text-[#4f7a65]" />Meeting #1</div>
        <div className={`${th} justify-start! bg-white pb-[9px] pl-[5px] text-[10.8px]`}>Steering Committee 2012-03-15</div>
        <div className={`${th} bg-white`}><div className="h-[21px] w-[65px] rounded-[9px] border border-[#c8c8c8] bg-[#ffa500] text-center text-[10px] leading-[19px] tracking-[-0.1px] text-black">recorded</div></div>
        <div className={`${th} bg-white`} />
      </div>
      <Section t="Attachments" n="0" pl="pl-[4px]" className="mt-[3px]" />
      <div className={`${box} mt-[4px] h-[20px] grid-cols-[50px_25px_427px]`}>
        <div className={`${th} gap-[6px]`}><Icon n="plus" className="size-[14px] text-[#4f7a65]" /><Icon n="chain" className="size-[15px] text-[#4f7a65]" /></div>
        <div className={`${th} pt-px`}>id</div>
        <div className={`${th} pt-px`}>file</div>
      </div>
      <Section t="Notes" n="0" pl="pl-[4px]" className="mt-[5px]" />
      <div className={`${box} mt-[5px] h-[19px] grid-cols-[50px_25px_427px]`}>
        <div className={th}><Icon n="plus" className="size-[14px] text-[#4f7a65]" /></div>
        <div className={`${th} pt-px`}>id</div>
        <div className={`${th} pt-px`}>note</div>
      </div>
    </div>
  );
}

export default function App() {
  return (
    <div className="relative flex h-[764px] w-[1598px] flex-col overflow-hidden border-b border-[#8f9893] bg-[#547764] font-['DejaVu_Sans',Verdana,sans-serif]">
      <TopBar />
      <MenuBar />
      <div className="flex min-h-0 flex-1">
        <Sidebar />
        <div className="flex w-[1550px] shrink-0 flex-col border-l border-white">
          <div className="flex h-[30px] shrink-0 items-center text-[11px] text-white">
            <div className="relative flex h-[30px] w-[38px] shrink-0 items-center justify-center overflow-hidden bg-[#ccd2ce] text-[#4f7a65]">
              <Icon n="global" b="#ccd2ce" className="size-[29px]" />
              <span className="absolute text-[17px] leading-[18px] font-bold tracking-[-0.3px] text-[#f07c28] [text-shadow:0_0_1px_#ccd2ce,0_0_2px_#ccd2ce,0_0_2px_#ccd2ce,0_0_3px_#ccd2ce]">26</span>
            </div>
            <span className="ml-[7px] w-[148px] shrink-0 pt-[2px] text-[13.5px] font-bold">Global view</span>
            <span className="w-[19px] pt-px">id</span>
            <div className="h-[18px] w-[59px] shrink-0 rounded-full border border-[#b9c4bd] bg-white shadow-[inset_0_2px_2px_#ddd]" />
            <span className="ml-[17px] w-[41px] pt-px">name</span>
            <div className="h-[18px] w-[104px] shrink-0 rounded-full border border-[#b9c4bd] bg-white shadow-[inset_0_2px_2px_#ddd]" />
            <span className="ml-[17px] w-[129px] pt-px tracking-[0.15px] whitespace-nowrap">Items to be displayed</span>
            <div className="flex h-[26px] w-[41px] shrink-0 items-center border border-white bg-[#c8dace] pl-[3px] text-[#4f7a65]">
              <Icon n="global" b="#c8dace" className="size-[21px]" />
              <Caret className="mb-[2px] ml-[3px] text-black" />
            </div>
            <div className="h-[20px] w-[39px] shrink-0 border border-[#a7b3ac] bg-[#c8dace] text-center leading-[19px] text-[#6d6d6d]">reset</div>
            <Btn n="searchBig" ml="ml-auto" />
            <Btn n="funnel" ml="ml-[3px]" w="w-[41px]" caret />
            <Btn n="columns" ml="ml-[5px]" w="w-[43px]" caret />
            <Btn n="printer" ml="ml-[3px]" />
            <Btn n="pdf" ml="ml-[3px]" />
            <Btn n="csv" ml="ml-[3px]" />
            <Btn n="newdoc" ml="ml-[3px]" w="w-[43px]" caret />
            <Btn n="refresh" ml="ml-0" />
            <span className="ml-[35px] w-[109px] pt-px whitespace-nowrap">show closed items</span>
            <div className="mr-[6px] size-[16px] shrink-0 rounded-[4px] border border-white bg-[#97aca0]" />
          </div>
          <Grid />
          <div className="flex h-[5px] shrink-0 items-start justify-center gap-px border-b border-[#c8dace] bg-[#547764] pt-px pr-[14px]">
            {[0, 1, 2, 3].map((k) => <div key={k} className="h-[2px] w-[3.5px] bg-[#d9e0dc]" />)}
          </div>
          <div className="flex h-[31px] shrink-0 items-center text-white">
            <div className="flex h-[31px] w-[38px] shrink-0 items-center justify-center bg-[#ccd2ce] text-[#4f7a65]"><Icon n="question" className="size-[29px]" /></div>
            <span className="ml-[5px] w-[585px] shrink-0 pt-px text-[13.5px] font-bold tracking-[0.28px] whitespace-nowrap">Question &nbsp;#1 - Who will be first deployed users ?</span>
            <div className="mt-[4px] h-[21px] w-[98px] rounded-[9px] border border-[#c9b48a] bg-[#ffa500] text-center text-[9.8px] leading-[19px] tracking-[-0.1px] text-black">recorded</div>
            <div className="relative ml-[45px] flex h-[29px] w-[28px] shrink-0 flex-col items-center rounded-[3px] border border-[#a9a9a9] bg-[#b9b9b9] px-px pt-[6px]">
              <div className="absolute -top-px left-[5px] h-[7px] w-[3px] rounded bg-[#777]" />
              <div className="absolute -top-px right-[5px] h-[7px] w-[3px] rounded bg-[#777]" />
              <div className="h-[21px] w-[24px] bg-white pt-[2px] text-center text-[7px] leading-[9px] tracking-[-0.3px] text-black">15/03<br />2012</div>
            </div>
            <div className="ml-[3px] size-[29px] shrink-0 rounded-full border border-[#c5e8d2] bg-[#2ecc71] text-center font-['Noto_Sans',sans-serif] text-[22px] leading-[27px] font-medium">A</div>
            <Btn n="newdoc" ml="ml-[61px]" w="w-[30px]" />
            {["save", "printer", "pdf"].map((n) => <Btn key={n} n={n} ml="ml-[4.1px]" />)}
            {["copy", "refresh", "trash", "mail", "rss"].map((n) => <Btn key={n} n={n} ml="ml-[4.1px]" />)}
            <div className="ml-[4px] flex h-[27px] w-[99px] shrink-0 rounded-[4px] border border-dashed border-[#c8c8c8] bg-[#e4e8e5] p-px">
              <div className="flex-1 border border-[#9aa8a0] bg-[#afc7b8] pt-[2px] text-center text-[8px] leading-[9.5px] tracking-[-0.1px] text-black">Attachment<br /><i className="tracking-[0.1px]">(drop files here)</i></div>
            </div>
          </div>
          <div className="flex min-h-0 flex-1 bg-[#fafafa] pl-[5px]">
            <div className="flex min-h-0 flex-1 pt-[6px]">
              <Description />
              <Answer />
              <Side />
            </div>
            <div className="flex w-[16px] shrink-0 flex-col items-center border-l border-white bg-[#f0f0f0]">
              <svg viewBox="0 0 8 6" className="mt-[7px] h-[6px] w-[8px]"><path d="M1 5l3-3.500L7 5" stroke="#505050" strokeWidth="2" fill="none" /></svg>
              <div className="mt-[5px] h-[150px] w-full bg-[#cdcdcd]" />
            </div>
          </div>
        </div>
      </div>
      <div className="absolute bottom-[3px] left-[45px] flex w-[17px] flex-col gap-[3px] bg-white/70">
        <div className="h-[4px] bg-[#4f7a65]" /><div className="h-[4px] bg-[#4f7a65]" /><div className="h-[4px] bg-[#4f7a65]" />
      </div>
      <div className="absolute right-[3px] bottom-[3px] flex w-[16px] flex-col gap-[3px] bg-white/70">
        <div className="h-[4px] bg-[#4f7a65]" /><div className="h-[4px] bg-[#4f7a65]" /><div className="h-[4px] bg-[#4f7a65]" />
      </div>
      <div className="absolute top-[413px] right-0 flex w-[3px] flex-col gap-px">
        {[0, 1, 2, 3, 4].map((k) => <div key={k} className="h-[2px] bg-[#d9e0dc]" />)}
      </div>
    </div>
  );
}
